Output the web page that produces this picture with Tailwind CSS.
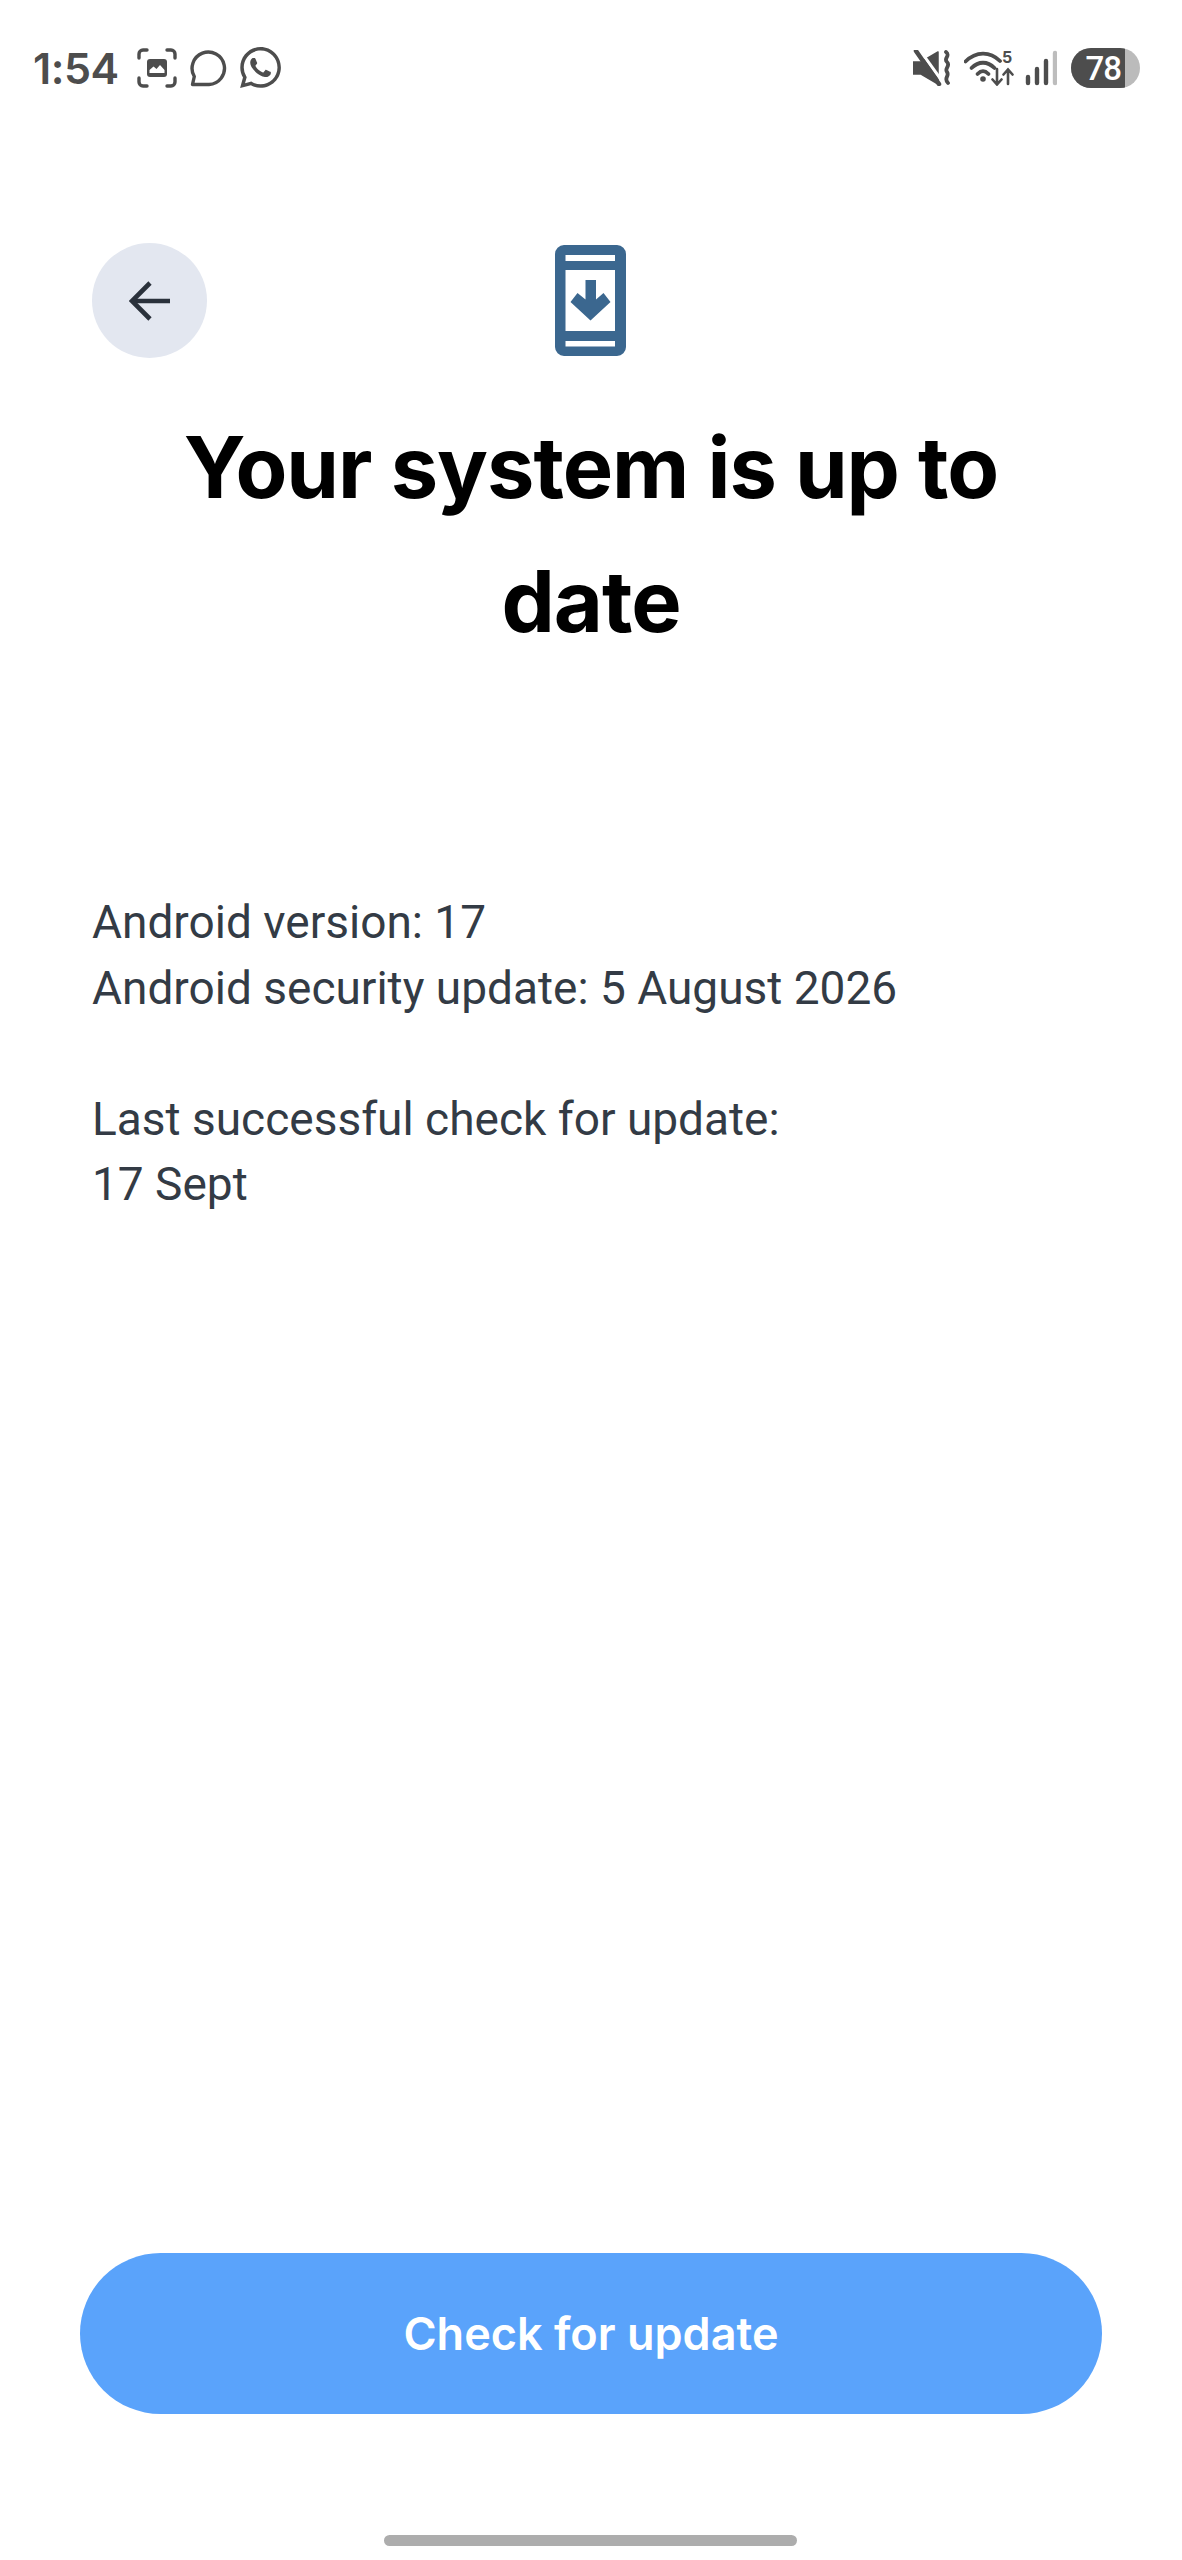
<!DOCTYPE html>
<html><head><meta charset="utf-8">
<script src="https://cdn.jsdelivr.net/npm/@tailwindcss/browser@4"></script>
</head>
<body class="bg-white">
<div class="w-[1182px] h-[2560px] flex flex-col bg-white overflow-hidden font-['Roboto',sans-serif]">
  <div class="h-[136px] shrink-0 flex items-center justify-between pl-[33px] pr-[42px] text-[#4d4d4d]">
    <div class="flex items-center">
      <span class="text-[43px] leading-none font-semibold font-['Inter',sans-serif] tracking-[-0.5px] w-[84px]">1:54</span>
      <svg class="ml-[20px]" width="40" height="40" viewBox="0 0 40 40" fill="none" stroke="#4d4d4d" stroke-width="3.4" stroke-linecap="round"><path d="M2 10V6a4 4 0 0 1 4-4h4M30 2h4a4 4 0 0 1 4 4v4M38 30v4a4 4 0 0 1-4 4h-4M10 38H6a4 4 0 0 1-4-4v-4"/><rect x="10" y="11" width="20" height="18" rx="3" fill="#4d4d4d" stroke="none"/><path d="M12.5 22l4-3.500 3 2.500 3.500-4 4.500 5v3h-15z" fill="#fff" stroke="none"/></svg>
      <svg class="ml-[13px]" width="37" height="37" viewBox="0 0 37 37" fill="none" stroke="#4d4d4d" stroke-width="3.400" stroke-linejoin="round"><path d="M2.500 34.500l1.800-8A16.200 16.200 0 1 1 19 34.500z"/></svg>
      <svg class="ml-[13px]" width="41" height="42" viewBox="0 0 24 24.500"><path fill="#4d4d4d" fill-rule="evenodd" d="M12.050 0C5.500 0 .16 5.340.16 11.890c0 2.100.55 4.140 1.590 5.950L.06 24l6.300-1.650a11.900 11.900 0 0 0 5.690 1.450c6.550 0 11.890-5.340 11.890-11.900S18.600 0 12.050 0zm0 21.800c-1.780 0-3.480-.48-5-1.380l-.36-.21-3.740.98 1-3.640-.24-.37a9.860 9.860 0 0 1-1.510-5.290c0-5.450 4.430-9.880 9.880-9.880 5.440 0 9.860 4.430 9.860 9.880s-4.440 9.910-9.890 9.910z"/><path fill="#4d4d4d" d="M17.470 14.380c-.3-.15-1.770-.87-2.040-.97-.27-.1-.47-.15-.67.15-.2.3-.77.97-.94 1.170-.17.2-.35.22-.65.07-.3-.15-1.260-.46-2.400-1.480-.89-.79-1.490-1.770-1.660-2.070-.17-.3-.02-.46.13-.61.13-.13.3-.35.45-.52.15-.17.2-.3.3-.5.1-.2.05-.37-.02-.52-.07-.15-.67-1.620-.92-2.220-.24-.58-.49-.5-.67-.51h-.57c-.2 0-.52.07-.79.37-.27.3-1.040 1.020-1.040 2.480s1.070 2.880 1.210 3.070c.15.2 2.100 3.200 5.080 4.490.71.310 1.270.49 1.700.63.710.23 1.360.2 1.870.12.57-.09 1.770-.72 2.020-1.420.25-.7.25-1.300.17-1.420-.07-.13-.27-.2-.57-.35z"/></svg>
    </div>
    <div class="flex items-center">
      <svg width="40" height="36" viewBox="0 0 40 36"><path d="M0 12h8L25 2v32L8 24H0z" fill="#4d4d4d" stroke="#4d4d4d" stroke-width="1.500" stroke-linejoin="round"/><path d="M6 -1l23 32" stroke="#fff" stroke-width="3"/><path d="M3 1l23 33" stroke="#4d4d4d" stroke-width="4.500" stroke-linecap="round"/><path d="M33 2c5 4-3 6 1 10s-3 6 0 10 -4 6 1 11" fill="none" stroke="#4d4d4d" stroke-width="3.800" stroke-linecap="round"/></svg>
      <div class="relative ml-[11px] w-[50px] h-[36px]">
        <svg width="50" height="36" viewBox="0 0 50 36" fill="none" stroke="#4d4d4d" stroke-width="3.800" stroke-linecap="round"><path d="M1.500 11.500C12 1 26 1 36 11"/><path d="M7.500 18c7-7 16-7 23 0"/><path d="M13.500 24c4-4 7-4 11 0"/><circle cx="19" cy="29" r="2.800" fill="#4d4d4d" stroke="none"/><path d="M33 19v15M28.500 29.500L33 34.500l4.500-5M44 34V20M39.500 24.500L44 19.500l4.500 5" stroke-width="2.600"/></svg>
        <span class="absolute left-[38px] top-[-2px] text-[16px] leading-[18px] font-bold font-['Inter',sans-serif] text-[#4d4d4d]">5</span>
      </div>
      <svg class="ml-[11px]" width="32" height="36" viewBox="0 0 32 36" stroke-linecap="round" fill="none" stroke-width="4.400"><path d="M3 27v6M12 19v14M21 11v22" stroke="#4d4d4d"/><path d="M30 3v30" stroke="#bdbdbd"/></svg>
      <div class="ml-[14px] w-[69px] h-[40px] rounded-full bg-[#bbbbbb] overflow-hidden">
        <div class="w-[54px] h-full bg-[#4d4d4d] flex items-center justify-end pr-[4px] text-white text-[33px] leading-none font-medium tracking-[-1px] font-['Roboto',sans-serif]">78</div>
      </div>
    </div>
  </div>

  <div class="mt-[107px] h-[115px] shrink-0 mx-[92px] grid grid-cols-[115px_1fr_115px] items-center">
    <div class="w-[115px] h-[115px] rounded-full bg-[#e3e7f0] flex items-center justify-center">
      <svg width="42" height="40" viewBox="0 0 42 40" fill="none" stroke="#2a313b" stroke-width="4.600"><path d="M41 20H3"/><path d="M21 2L3 20l18 18"/></svg>
    </div>
    <div class="flex justify-center">
      <svg class="-ml-px" width="71" height="111" viewBox="0 0 71 111"><path fill="#3b678f" fill-rule="evenodd" d="M9 0h53a9 9 0 0 1 9 9v93a9 9 0 0 1-9 9H9a9 9 0 0 1-9-9V9a9 9 0 0 1 9-9zM10.500 10v6H60v-6zM10.500 25v61H60V25zM10.500 96v5.500H60V96z"/><path fill="#3b678f" d="M30.500 35H41v19.500l7.500-6.500 7 9-20 18.500-20-18.500 7-9 8 6.500z"/></svg>
    </div>
    <div></div>
  </div>

  <h1 class="mt-[42px] mx-[90px] text-center text-[84.700px] leading-[134px] font-bold text-black font-['Inter',sans-serif] tracking-[-1px]">Your system is up to<br>date</h1>

  <div class="mt-[222px] ml-[92px] text-[#333b45] text-[46px] leading-[65.500px]">
    <p>Android version: 17</p>
    <p>Android security update: 5 August 2026</p>
    <p class="mt-[65.500px]">Last successful check for update:</p>
    <p>17 Sept</p>
  </div>

  <div class="flex-1"></div>

  <button class="mx-[80px] h-[161px] shrink-0 rounded-full bg-[#5aa3fb] text-white text-[45px] font-semibold flex items-center justify-center font-['Inter',sans-serif]">Check for update</button>
  <div class="mt-[121px] mb-[14px] ml-[384px] w-[413px] h-[11px] shrink-0 rounded-full bg-[#adadad]"></div>
</div>
</body></html>
